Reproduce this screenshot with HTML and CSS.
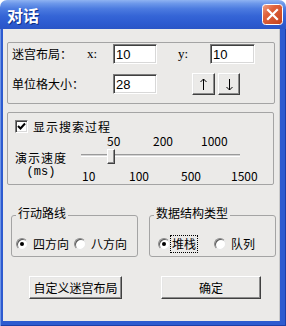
FILE: index.html
```html
<!DOCTYPE html>
<html lang="zh">
    <head>
        <meta charset="UTF-8">
        <title>对话</title>
        <link rel="stylesheet" href="styles.css">
    </head>
    <body>
        <div class="window">
            <div class="titlebar">
                <span class="title">对话</span>
                <span class="close">
                    <svg width="21" height="21" viewBox="0 0 21 21">
                        <defs>
                            <linearGradient id="closeBg" x1="0" y1="0" x2="1" y2="1">
                                <stop offset="0" stop-color="#f0a58a"/>
                                <stop offset="0.35" stop-color="#e0623c"/>
                                <stop offset="1" stop-color="#c2401c"/>
                            </linearGradient>
                        </defs>
                        <rect x="0.5" y="0.5" width="20" height="20" rx="3" fill="url(#closeBg)" stroke="#fff"/>
                        <path d="M6 6 L15 15 M15 6 L6 15" stroke="#fff" stroke-width="2.2" stroke-linecap="square"/>
                    </svg>
                </span>
            </div>
            <div class="frame">
                <div class="client">
                    <div class="group maze">
                        <div class="row row-first">
                            <span class="lbl-maze">迷宫布局：</span>
                            <span class="lbl-x">x:</span>
                            <input type="text" class="field w44" value="10">
                            <span class="lbl-y">y:</span>
                            <input type="text" class="field w45" value="10">
                        </div>
                        <div class="row row-second">
                            <span class="lbl-cell">单位格大小：</span>
                            <input type="text" class="field w44" value="28">
                            <span class="btn arrow up">
                                <svg width="7" height="13" viewBox="0 0 7 13"><path d="M3.5 1 V12 M0.5 4 L3.5 1 L6.5 4" stroke="#000" fill="none"/></svg>
                            </span>
                            <span class="btn arrow down">
                                <svg width="7" height="13" viewBox="0 0 7 13"><path d="M3.5 1 V12 M0.5 9 L3.5 12 L6.5 9" stroke="#000" fill="none"/></svg>
                            </span>
                        </div>
                    </div>

                    <div class="group speed-group">
                        <div class="check-row">
                            <span class="checkbox">
                                <svg width="9" height="9" viewBox="0 0 9 9"><path d="M1 4 L3.5 6.5 L8 1.5" stroke="#000" stroke-width="2" fill="none"/></svg>
                            </span>
                            <span class="check-label">显示搜索过程</span>
                        </div>
                        <div class="speed">
                            <div class="speed-label">
                                <div>演示速度</div>
                                <div class="unit">(ms)</div>
                            </div>
                            <div class="slider">
                                <div class="ticks ticks-top">
                                    <span class="t50">50</span>
                                    <span class="t200">200</span>
                                    <span>1000</span>
                                </div>
                                <div class="track-area">
                                    <div class="track"></div>
                                    <div class="thumb"></div>
                                </div>
                                <div class="ticks ticks-bottom">
                                    <span class="t10">10</span>
                                    <span class="t100">100</span>
                                    <span class="t500">500</span>
                                    <span>1500</span>
                                </div>
                            </div>
                        </div>
                    </div>

                    <div class="options">
                        <fieldset class="opt route">
                            <legend>行动路线</legend>
                            <div class="radio-row">
                                <span class="radio on"></span>
                                <span class="radio-label">四方向</span>
                                <span class="radio second"></span>
                                <span class="radio-label">八方向</span>
                            </div>
                        </fieldset>
                        <fieldset class="opt structure">
                            <legend>数据结构类型</legend>
                            <div class="radio-row">
                                <span class="radio on first"></span>
                                <span class="radio-label focus">堆栈</span>
                                <span class="radio third"></span>
                                <span class="radio-label">队列</span>
                            </div>
                        </fieldset>
                    </div>

                    <div class="actions">
                        <span class="btn custom">自定义迷宫布局</span>
                        <span class="btn ok">确定</span>
                    </div>
                </div>
            </div>
        </div>
    </body>
</html>
```

FILE: styles.css
```css
* {
    box-sizing: border-box;
}

body {
    margin: 0;
    background: #fff;
    font-family: "Noto Sans CJK SC", sans-serif;
    font-size: 12px;
    line-height: 12px;
    color: #000;
}

.window {
    width: 286px;
    height: 326px;
    display: flex;
    flex-direction: column;
}

/* title bar */
.titlebar {
    height: 29px;
    display: flex;
    align-items: center;
    padding: 0 3px 0 7px;
    border-radius: 7px 7px 0 0;
    background: linear-gradient(#8fb3f2 0%, #6d98ea 12%, #4c7be0 30%, #3565d6 55%, #2d5bd0 80%, #2a55c6 100%);
}

.title {
    flex: 1;
    color: #fff;
    font-weight: bold;
    font-size: 16px;
    line-height: 16px;
    text-shadow: 1px 1px #122f85;
}

.close {
    width: 21px;
    height: 21px;
    display: flex;
}

/* window frame */
.frame {
    flex: 1;
    display: flex;
    padding: 0 6px 5px 3px;
    background: #2d5bd0;
    box-shadow: inset 1px 0 #6f95e6, inset -1px -1px #1c3fa8;
}

.client {
    flex: 1;
    background: #ebeae8;
    border-right: 1px solid #c9c9c9;
}

/* group boxes */
.group {
    border: 1px solid #a4a4a4;
    border-radius: 2px;
    margin-left: 4px;
}

.maze {
    width: 268px;
    margin-top: 13px;
    padding: 1px 0 8px 4px;
}

.row {
    display: flex;
    align-items: center;
}

.row-first {
    height: 20px;
}

.row-second {
    height: 22px;
    margin-top: 9px;
}

.lbl-maze {
    width: 75px;
}

.lbl-x, .lbl-y {
    font-family: "Liberation Serif", serif;
    font-size: 13px;
}

.lbl-x {
    width: 26px;
}

.lbl-y {
    width: 32px;
    margin-left: 21px;
}

.lbl-cell {
    width: 101px;
}

.field {
    height: 20px;
    padding: 0 0 0 2px;
    font-family: "Liberation Sans", sans-serif;
    font-size: 13px;
    background: #fff;
    border: 1px solid;
    border-color: #7c7c7c #fff #fff #7c7c7c;
    box-shadow: inset 1px 1px #404040, inset -1px -1px #d8d8d8;
    outline: none;
}

.w44 {
    width: 44px;
}

.w45 {
    width: 45px;
}

.btn {
    display: flex;
    align-items: center;
    justify-content: center;
    background: #ebeae8;
    border: 1px solid;
    border-color: #fff #404040 #404040 #fff;
    box-shadow: inset -1px -1px #8c8c8c, inset 1px 1px #e6e6e6;
}

.arrow {
    height: 22px;
}

.up {
    width: 23px;
    margin-left: 35px;
}

.down {
    width: 22px;
    margin-left: 3px;
}

/* speed group */
.speed-group {
    width: 267px;
    margin-top: 8px;
    padding: 7px 0 2px 7px;
}

.check-row {
    display: flex;
    align-items: center;
    height: 13px;
}

.checkbox {
    width: 13px;
    height: 13px;
    display: flex;
    align-items: center;
    justify-content: center;
    background: #fff;
    border: 1px solid;
    border-color: #7c7c7c #fff #fff #7c7c7c;
    box-shadow: inset 1px 1px #404040, inset -1px -1px #d8d8d8;
}

.check-label {
    margin-left: 5px;
    letter-spacing: 1px;
}

.speed {
    display: flex;
    margin-top: 2px;
}

.speed-label {
    width: 66px;
    padding-top: 17px;
}

.speed-label div {
    width: 52px;
    text-align: center;
    letter-spacing: 1px;
}

.speed-label .unit {
    margin-top: 2px;
    letter-spacing: 0;
    font-family: "Liberation Mono", monospace;
}

.slider {
    width: 180px;
}

.ticks {
    display: flex;
    height: 12px;
}

.ticks-top {
    padding-left: 26px;
}

.t50 {
    width: 46px;
}

.t200 {
    width: 48px;
}

.ticks-bottom {
    margin-top: 6px;
    padding-left: 1px;
}

.t10 {
    width: 47px;
}

.t100 {
    width: 52px;
}

.t500 {
    width: 50px;
}

.track-area {
    position: relative;
    height: 17px;
    padding-top: 7px;
}

.track {
    width: 159px;
    height: 3px;
    border-top: 1px solid #9a9a9a;
    border-bottom: 1px solid #fff;
    background: #d4d4d4;
}

.thumb {
    position: absolute;
    left: 26px;
    top: 2px;
    width: 8px;
    height: 15px;
    background: #ebeae8;
    border: 1px solid;
    border-color: #fff #404040 #404040 #fff;
    box-shadow: inset -1px -1px #8c8c8c;
}

/* option groups */
.options {
    display: flex;
    gap: 11px;
    margin: 22px 0 0 8px;
}

.opt {
    width: 127px;
    min-width: 0;
    margin: 0;
    padding: 14px 0 6px 4px;
    border: 1px solid #a4a4a4;
    border-radius: 3px;
}

.opt legend {
    padding: 0 2px 4px;
    line-height: 12px;
}

.radio-row {
    display: flex;
    align-items: center;
    height: 13px;
}

.radio {
    width: 12px;
    height: 12px;
    border-radius: 50%;
    background: #fff;
    border: 1px solid;
    border-color: #8a8a8a #e8e8e8 #e8e8e8 #8a8a8a;
    box-shadow: inset 1px 1px #5a5a5a;
    display: flex;
    align-items: center;
    justify-content: center;
}

.radio.on::after {
    content: "";
    width: 4px;
    height: 4px;
    border-radius: 50%;
    background: #000;
}

.radio-label {
    margin-left: 5px;
}

.radio.second {
    margin-left: 5px;
}

.radio.first {
    margin-left: 4px;
}

.radio-label.focus {
    margin-left: 1px;
    padding: 2px 1px;
    outline: 1px dotted #000;
}

.radio.third {
    margin-left: 17px;
}

/* bottom buttons */
.actions {
    display: flex;
    margin: 19px 0 0 26px;
}

.custom, .ok {
    height: 23px;
    padding-top: 1px;
}

.custom {
    width: 93px;
}

.ok {
    width: 100px;
    margin-left: 39px;
}
```
